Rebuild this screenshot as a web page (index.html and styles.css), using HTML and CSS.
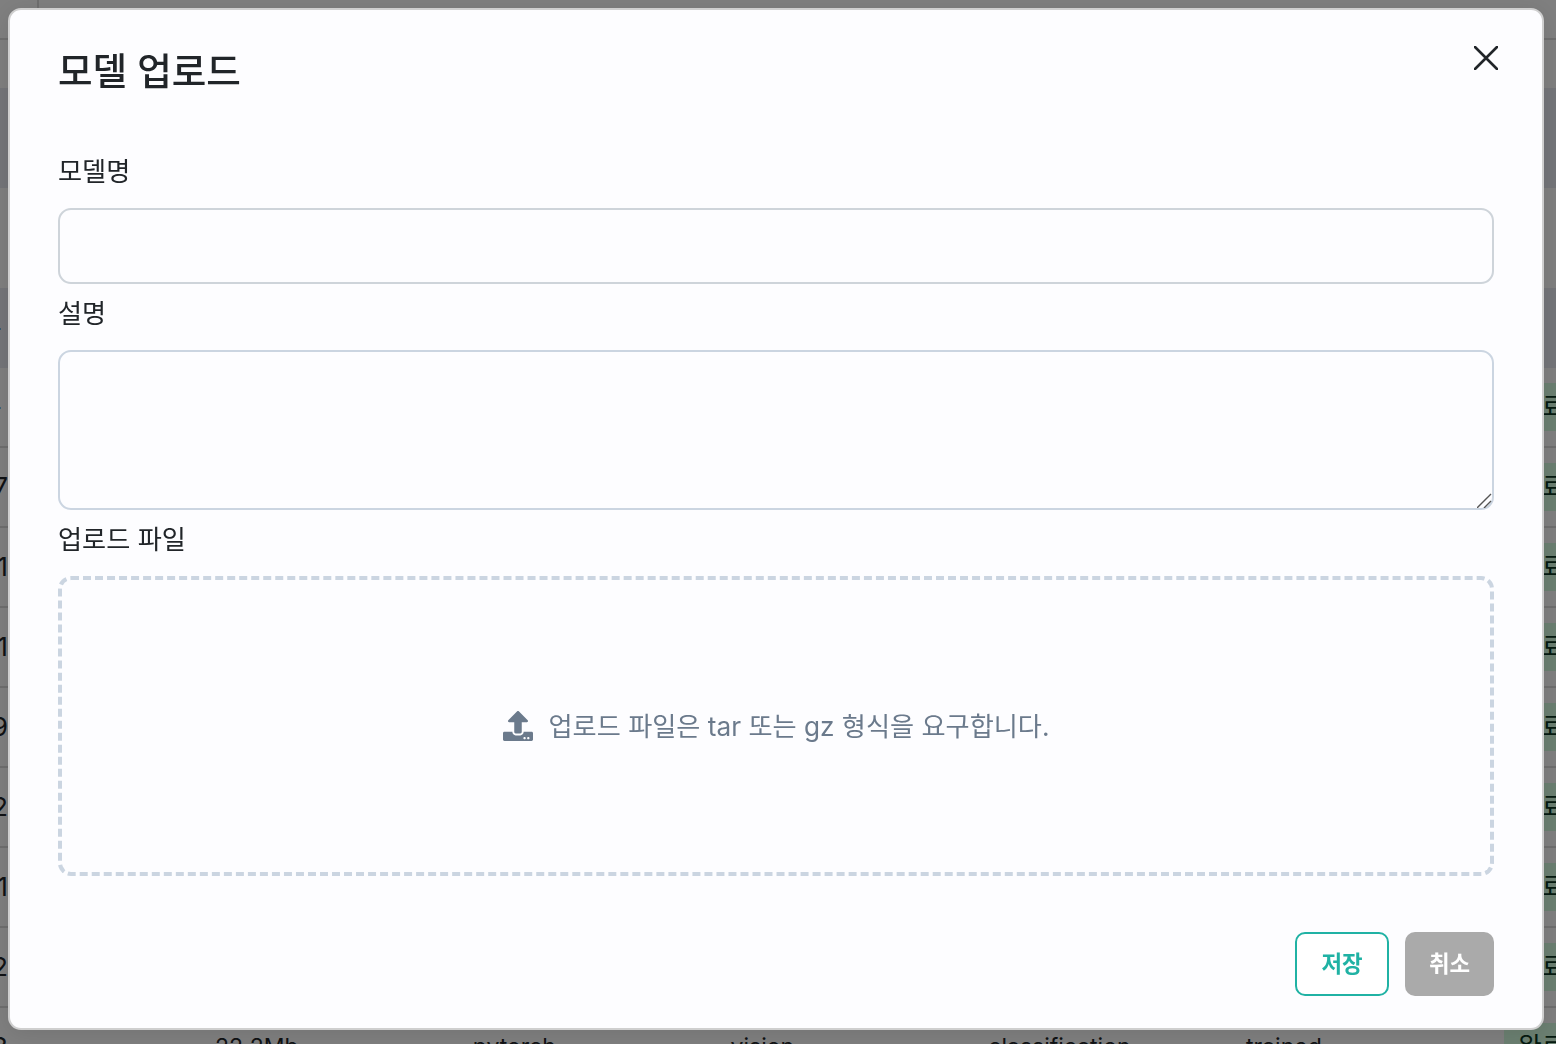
FILE: index.html
```html
<!DOCTYPE html>
<html lang="ko">

<head>
    <meta charset="UTF-8">
    <meta name="viewport" content="width=device-width, initial-scale=1.0">
    <title>모델 업로드</title>
    <link rel="stylesheet" href="styles.css">
</head>

<body>
    <!-- page behind the dialog -->
    <div class="page">
        <div class="topbar"><div class="topbar-side"></div></div>
        <div class="band band-tint"></div>
        <div class="band"></div>
        <div class="row row-head"><span class="num num-tick">-</span></div>
        <div class="row"><span class="num num-tick">-</span><span class="badge">완료</span></div>
        <div class="row"><span class="num">7</span><span class="badge">완료</span></div>
        <div class="row"><span class="num">1</span><span class="badge">완료</span></div>
        <div class="row"><span class="num">1</span><span class="badge">완료</span></div>
        <div class="row"><span class="num">9</span><span class="badge">완료</span></div>
        <div class="row"><span class="num">2</span><span class="badge">완료</span></div>
        <div class="row"><span class="num">1</span><span class="badge">완료</span></div>
        <div class="row"><span class="num">2</span><span class="badge">완료</span></div>
        <div class="row">
            <span class="num">3</span>
            <span class="cell">22.2Mb</span>
            <span class="cell">pytorch</span>
            <span class="cell">vision</span>
            <span class="cell">classification</span>
            <span class="cell">trained</span>
            <span class="badge">완료</span>
        </div>
    </div>

    <div class="backdrop"></div>

    <!-- upload dialog -->
    <form class="modal">
        <div class="modal-header">
            <h1 class="modal-title">모델 업로드</h1>
            <button type="button" class="close-btn" aria-label="닫기">
                <svg viewBox="0 0 24 24" width="24" height="24" fill="none" stroke="#212529" stroke-width="2.6" stroke-linecap="round">
                    <path d="M1 1L23 23M23 1L1 23" />
                </svg>
            </button>
        </div>

        <label class="label" for="modelName">모델명</label>
        <input type="text" id="modelName" class="input">

        <label class="label" for="modelDesc">설명</label>
        <textarea id="modelDesc" class="textarea"></textarea>

        <label class="label">업로드 파일</label>
        <div class="dropzone">
            <svg class="upload-icon" viewBox="0 0 512 512" width="30" height="30" fill="#6b7a8c">
                <path d="M296 384h-80c-13.3 0-24-10.7-24-24V192h-87.7c-17.8 0-26.7-21.5-14.1-34.1L242.3 5.7c7.5-7.5 19.8-7.5 27.3 0l152.2 152.2c12.6 12.6 3.7 34.1-14.1 34.1H320v168c0 13.3-10.7 24-24 24zm216-8v112c0 13.3-10.7 24-24 24H24c-13.3 0-24-10.7-24-24V376c0-13.3 10.7-24 24-24h136v8c0 30.9 25.1 56 56 56h80c30.9 0 56-25.1 56-56v-8h136c13.3 0 24 10.7 24 24zm-124 88c0-11-9-20-20-20s-20 9-20 20 9 20 20 20 20-9 20-20zm64 0c0-11-9-20-20-20s-20 9-20 20 9 20 20 20 20-9 20-20z" />
            </svg>
            <span class="hint">업로드 파일은 tar 또는 gz 형식을 요구합니다.</span>
        </div>

        <div class="modal-footer">
            <button type="submit" class="btn btn-save">저장</button>
            <button type="button" class="btn btn-cancel">취소</button>
        </div>
    </form>
</body>

</html>
```

FILE: styles.css
```css
* {
    margin: 0;
    padding: 0;
    box-sizing: border-box;
}

html,
body {
    height: 100%;
    overflow: hidden;
}

body {
    font-family: Inter, "Noto Sans CJK KR", sans-serif;
    font-size: 26.2px;
    line-height: 1.5;
    color: #212529;
    background-color: #fff;
}

/* page behind the dialog */
.topbar {
    height: 40px;
    border-bottom: 2px solid #ddd;
    margin-bottom: 48px;
}

.topbar-side {
    width: 39px;
    height: 38px;
    border-right: 2px solid #ddd;
}

.band {
    height: 100px;
}

.band-tint,
.row-head {
    background-color: #e8eaf2;
}

.row {
    display: grid;
    grid-template-columns: 215px repeat(5, 257.75px) 1fr;
    align-items: center;
    height: 80px;
    border-bottom: 2px solid #ddd;
    white-space: nowrap;
}

.row-head {
    border-bottom: none;
}

/* only the tail of this column shows at the left edge */
.num {
    display: flex;
    justify-content: flex-end;
    width: 8px;
}

.num-tick {
    width: 2px;
}

.cell {
    font-size: 23px;
}

.badge {
    grid-column: 7;
    height: 48px;
    line-height: 48px;
    padding: 0 14px;
    background-color: #d6ffe2;
    color: #0a3622;
}

.backdrop {
    position: fixed;
    top: 0;
    left: 0;
    width: 100%;
    height: 100%;
    background-color: rgba(0, 0, 0, 0.5);
}

/* dialog */
.modal {
    position: fixed;
    top: 8px;
    left: 8px;
    width: 1536px;
    padding: 32px 48px;
    background-color: #fdfdff;
    border: 2px solid #cfcfcf;
    border-radius: 13px;
    box-shadow: 0 4px 24px rgba(0, 0, 0, 0.1);
}

.modal-header {
    display: flex;
    justify-content: space-between;
    align-items: flex-start;
    margin-bottom: 51px;
}

.modal-title {
    padding-top: 2px;
    font-size: 37.6px;
    font-weight: 500;
    line-height: 56px;
}

.close-btn {
    display: flex;
    margin: 4px -4px 0 0;
    background: none;
    border: none;
    cursor: pointer;
}

.label {
    display: block;
    margin-bottom: 17px;
    padding-top: 2px;
    line-height: 38px;
}

.input,
.textarea {
    display: block;
    width: 100%;
    margin-bottom: 9px;
    padding: 10px 16px;
    font: inherit;
    background-color: transparent;
    border-radius: 13px;
}

.input {
    height: 76px;
    border: 2px solid #ced4da;
}

.textarea {
    height: 160px;
    border: 2px solid #cbd5e1;
}

.textarea::-webkit-resizer {
    background: url("data:image/svg+xml,%3Csvg xmlns='http://www.w3.org/2000/svg' width='15' height='15'%3E%3Cpath d='M0 15L14 1M7 15L14 8' stroke='%23555' stroke-width='1.4' fill='none'/%3E%3C/svg%3E") no-repeat right bottom;
}

.dropzone {
    display: flex;
    justify-content: center;
    align-items: center;
    gap: 16px;
    height: 300px;
    border: 4px dashed #cbd5e1;
    border-radius: 13px;
}

.hint {
    padding-top: 2px;
    color: #6b7a8c;
}

.modal-footer {
    display: flex;
    justify-content: flex-end;
    gap: 16px;
    margin-top: 56px;
}

.btn {
    height: 64px;
    padding-bottom: 4px;
    font-family: inherit;
    font-size: 22.4px;
    font-weight: 700;
    border-radius: 10px;
    cursor: pointer;
}

.btn-save {
    width: 94px;
    color: #20b2a4;
    background-color: #fff;
    border: 2px solid #20b2a4;
}

.btn-cancel {
    width: 89px;
    color: #fff;
    background-color: #aaa;
    border: none;
}
```
